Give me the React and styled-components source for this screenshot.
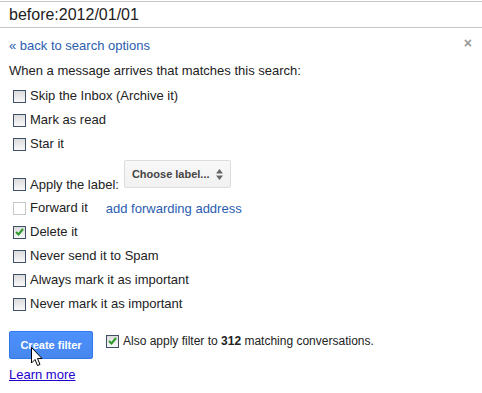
import React from "react";
import styled, { createGlobalStyle } from "styled-components";

const GlobalStyle = createGlobalStyle`
  html, body {
    margin: 0;
    padding: 0;
    background: #fff;
  }
  body {
    font-family: "Liberation Sans", Arial, sans-serif;
    font-size: 13px;
    color: #222;
  }
`;

const Page = styled.div`
  position: relative;
  width: 482px;
  height: 393px;
  overflow: hidden;
`;

const SearchBox = styled.div`
  margin-top: 1px;
  height: 25px;
  border-top: 1px solid #c6c6c6;
  border-bottom: 1px solid #c6c6c6;
  padding-left: 9px;
  font-size: 16px;
  line-height: 26px;
  color: #222;
`;

const Panel = styled.div`
  padding: 7px 9px 0 9px;
`;

const TopRow = styled.div`
  display: flex;
  justify-content: space-between;
  align-items: center;
  height: 20px;
`;

const BackLink = styled.a`
  color: #2a5db0;
  text-decoration: none;
  font-size: 13px;
`;

const Close = styled.span`
  color: #999;
  font-size: 14px;
  font-weight: bold;
  margin-right: 1px;
  margin-top: -4px;
`;

const Intro = styled.div`
  margin-top: 8px;
  height: 16px;
  line-height: 16px;
`;

const List = styled.div`
  display: flex;
  flex-direction: column;
  padding-left: 4px;
  margin-top: 5px;
`;

const Row = styled.label`
  display: flex;
  align-items: ${(p) => (p.tall ? "flex-end" : "center")};
  height: ${(p) => p.h || 24}px;
  gap: 4px;
  color: #222;
`;

const Box = styled.span`
  box-sizing: border-box;
  width: 13px;
  height: 13px;
  flex: none;
  border: 1px solid ${(p) => (p.disabled ? "#c8c8c8" : "#3d5066")};
  background: ${(p) =>
    p.disabled ? "#fff" : "linear-gradient(#dcdcdc, #f8f8f8)"};
  display: flex;
  align-items: center;
  justify-content: center;
  margin-bottom: ${(p) => (p.tall ? "5px" : "0")};
`;

const Label = styled.span`
  line-height: 16px;
`;

const Select = styled.div`
  box-sizing: border-box;
  margin-left: 1px;
  width: 107px;
  height: 28px;
  border: 1px solid #dcdcdc;
  border-radius: 2px;
  background: linear-gradient(#f8f8f8, #f1f1f1);
  display: flex;
  align-items: center;
  justify-content: space-between;
  padding: 0 7px 0 7px;
  font-size: 11px;
  font-weight: bold;
  color: #444;
  align-self: flex-start;
  margin-top: 4px;
`;

const ForwardLink = styled.a`
  color: #2a5db0;
  text-decoration: none;
  margin-left: 14px;
`;

const Footer = styled.div`
  display: flex;
  align-items: flex-start;
  margin-top: 15px;
  gap: 13px;
`;

const Button = styled.button`
  box-sizing: border-box;
  width: 84px;
  height: 28px;
  border: 1px solid #3079ed;
  border-radius: 2px;
  background: linear-gradient(#4d90fe, #4787ed);
  color: #fff;
  font-family: "Liberation Sans", Arial, sans-serif;
  font-size: 11px;
  font-weight: bold;
  padding: 0;
`;

const AlsoRow = styled.label`
  display: flex;
  align-items: center;
  gap: 4px;
  margin-top: 2px;
  height: 16px;
  font-size: 12px;
`;

const Learn = styled.a`
  display: block;
  margin-top: 8px;
  color: #2200cc;
  text-decoration: underline;
`;

const Cursor = styled.svg`
  position: absolute;
  left: 31px;
  top: 347px;
`;

const Check = () => (
  <svg width="9" height="8" viewBox="0 0 9 8">
    <path d="M1 4 L3.5 6.5 L8 1" stroke="#2c9a2c" strokeWidth="2" fill="none" />
  </svg>
);

const CheckRow = ({ children, checked, disabled, h, tall }) => (
  <Row h={h} tall={tall}>
    <Box disabled={disabled} tall={tall}>
      {checked && <Check />}
    </Box>
    {children}
  </Row>
);

export default function App() {
  return (
    <Page>
      <GlobalStyle />
      <SearchBox>before:2012/01/01</SearchBox>
      <Panel>
        <TopRow>
          <BackLink href="#">« back to search options</BackLink>
          <Close>×</Close>
        </TopRow>
        <Intro>When a message arrives that matches this search:</Intro>
        <List>
          <CheckRow>
            <Label>Skip the Inbox (Archive it)</Label>
          </CheckRow>
          <CheckRow>
            <Label>Mark as read</Label>
          </CheckRow>
          <CheckRow>
            <Label>Star it</Label>
          </CheckRow>
          <CheckRow h={40} tall>
            <Label style={{ marginBottom: 3 }}>Apply the label:</Label>
            <Select>
              <span>Choose label...</span>
              <svg width="7" height="11" viewBox="0 0 7 11">
                <path d="M0 4.5 L3.5 0 L7 4.5 Z M0 6.5 L3.5 11 L7 6.5 Z" fill="#666" />
              </svg>
            </Select>
          </CheckRow>
          <CheckRow disabled>
            <Label>Forward it</Label>
            <ForwardLink href="#">add forwarding address</ForwardLink>
          </CheckRow>
          <CheckRow checked>
            <Label>Delete it</Label>
          </CheckRow>
          <CheckRow>
            <Label>Never send it to Spam</Label>
          </CheckRow>
          <CheckRow>
            <Label>Always mark it as important</Label>
          </CheckRow>
          <CheckRow>
            <Label>Never mark it as important</Label>
          </CheckRow>
        </List>
        <Footer>
          <Button>Create filter</Button>
          <AlsoRow>
            <Box>
              <Check />
            </Box>
            <span>
              Also apply filter to <b>312</b> matching conversations.
            </span>
          </AlsoRow>
        </Footer>
        <Learn href="#">Learn more</Learn>
      </Panel>
      <Cursor width="12" height="20" viewBox="0 0 12 20">
        <path
          d="M0.5 0.5 L0.5 16 L4 12.5 L6.5 18.5 L9 17.5 L6.5 11.5 L11 11.5 Z"
          fill="#fff"
          stroke="#000"
          strokeWidth="1"
        />
      </Cursor>
    </Page>
  );
}
